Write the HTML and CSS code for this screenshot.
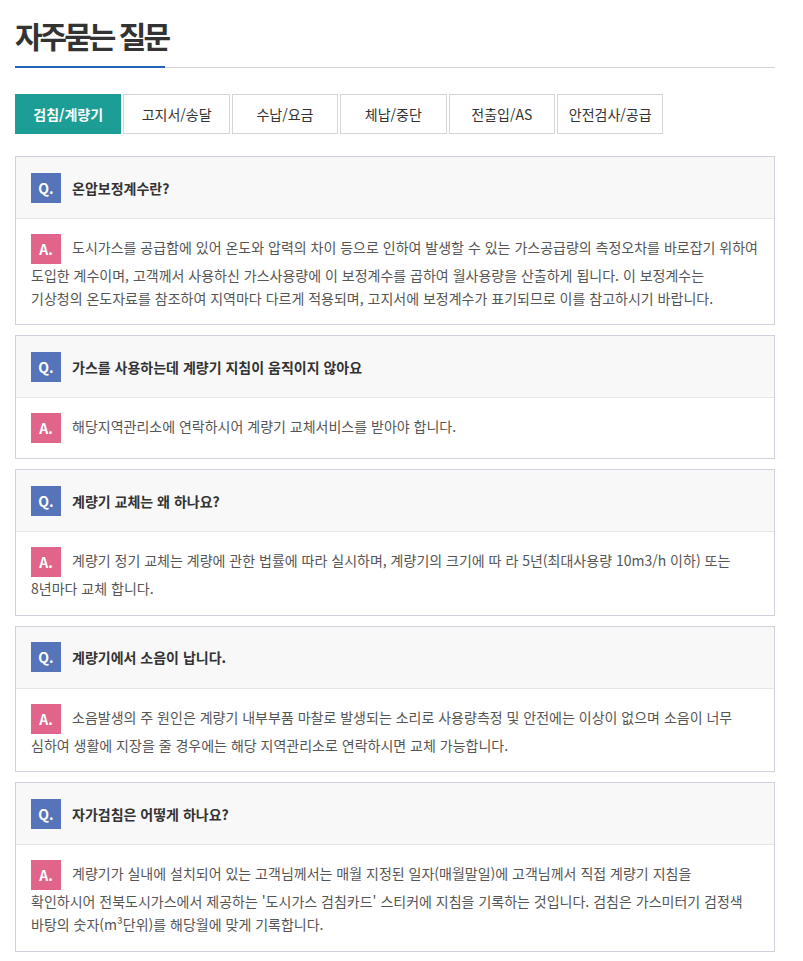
FILE: index.html
```html
<!DOCTYPE html>
<html lang="ko">
<head>
    <meta charset="UTF-8">
    <meta name="viewport" content="width=device-width, initial-scale=1.0">
    <title>자주묻는 질문</title>
    <link rel="stylesheet" href="styles.css">
</head>
<body>
    <div class="faq-wrap">
        <h2 class="page-title">자주묻는 질문</h2>

        <!-- 분류 탭 -->
        <ul class="faq-tabs">
            <li class="on"><a href="#">검침/계량기</a></li>
            <li><a href="#">고지서/송달</a></li>
            <li><a href="#">수납/요금</a></li>
            <li><a href="#">체납/중단</a></li>
            <li><a href="#">전출입/AS</a></li>
            <li><a href="#">안전검사/공급</a></li>
        </ul>

        <!-- 질문 목록 -->
        <div class="faq-list">
            <div class="faq-item">
                <div class="faq-q"><span class="badge q">Q.</span>온압보정계수란?</div>
                <div class="faq-a"><span class="badge a">A.</span>도시가스를 공급함에 있어 온도와 압력의 차이 등으로 인하여 발생할 수 있는 가스공급량의 측정오차를 바로잡기 위하여 도입한 계수이며, 고객께서 사용하신 가스사용량에 이 보정계수를 곱하여 월사용량을 산출하게 됩니다. 이 보정계수는<br>기상청의 온도자료를 참조하여 지역마다 다르게 적용되며, 고지서에 보정계수가 표기되므로 이를 참고하시기 바랍니다.</div>
            </div>
            <div class="faq-item">
                <div class="faq-q"><span class="badge q">Q.</span>가스를 사용하는데 계량기 지침이 움직이지 않아요</div>
                <div class="faq-a"><span class="badge a">A.</span>해당지역관리소에 연락하시어 계량기 교체서비스를 받아야 합니다.</div>
            </div>
            <div class="faq-item">
                <div class="faq-q"><span class="badge q">Q.</span>계량기 교체는 왜 하나요?</div>
                <div class="faq-a"><span class="badge a">A.</span>계량기 정기 교체는 계량에 관한 법률에 따라 실시하며, 계량기의 크기에 따 라 5년(최대사용량 10m3/h 이하) 또는<br>8년마다 교체 합니다.</div>
            </div>
            <div class="faq-item">
                <div class="faq-q"><span class="badge q">Q.</span>계량기에서 소음이 납니다.</div>
                <div class="faq-a"><span class="badge a">A.</span>소음발생의 주 원인은 계량기 내부부품 마찰로 발생되는 소리로 사용량측정 및 안전에는 이상이 없으며 소음이 너무<br>심하여 생활에 지장을 줄 경우에는 해당 지역관리소로 연락하시면 교체 가능합니다.</div>
            </div>
            <div class="faq-item">
                <div class="faq-q"><span class="badge q">Q.</span>자가검침은 어떻게 하나요?</div>
                <div class="faq-a"><span class="badge a">A.</span>계량기가 실내에 설치되어 있는 고객님께서는 매월 지정된 일자(매월말일)에 고객님께서 직접 계량기 지침을<br>확인하시어 전북도시가스에서 제공하는 '도시가스 검침카드' 스티커에 지침을 기록하는 것입니다. 검침은 가스미터기 검정색<br>바탕의 숫자(m³단위)를 해당월에 맞게 기록합니다.</div>
            </div>
        </div>
    </div>
</body>
</html>
```

FILE: styles.css
```css
body {
    margin: 0;
    font-family: "Noto Sans CJK KR", "Noto Sans", sans-serif;
    color: #333;
    background: #fff;
}
.faq-wrap {
    width: 760px;
    padding: 0 15px;
}
.page-title {
    position: relative;
    margin: 0;
    padding: 14px 0 11px;
    font-size: 30px;
    line-height: 42px;
    font-weight: 700;
    letter-spacing: -3px;
    color: #333;
    border-bottom: 1px solid #d3d3d3;
}
.page-title::after {
    content: "";
    position: absolute;
    left: 0;
    bottom: -1px;
    width: 150px;
    height: 2px;
    background: #2163b8;
}
.faq-tabs {
    display: flex;
    gap: 2px;
    margin: 26px 0 22px;
    padding: 0;
    list-style: none;
}
.faq-tabs li {
    width: 106.4px;
}
.faq-tabs a {
    display: block;
    height: 38px;
    line-height: 38px;
    border: 1px solid #d5d5d5;
    text-align: center;
    font-size: 14px;
    color: #333;
    text-decoration: none;
}
.faq-tabs li.on a {
    background: #1c9e96;
    border-color: #1c9e96;
    color: #fff;
    font-weight: 700;
}
.faq-item {
    margin-bottom: 10px;
    border: 1px solid #cdd2de;
}
.faq-q {
    display: flex;
    align-items: center;
    min-height: 31px;
    padding: 15px;
    background: #f8f8f8;
    border-bottom: 1px solid #e6e6e6;
    font-size: 14px;
    font-weight: 700;
    color: #333;
}
.faq-a {
    padding: 15px;
    font-size: 14px;
    line-height: 22.6px;
    color: #555;
}
.badge {
    display: inline-block;
    width: 30px;
    height: 30px;
    margin-right: 11px;
    line-height: 30px;
    text-align: center;
    font-size: 14px;
    font-weight: 700;
    color: #fff;
    vertical-align: middle;
}
.badge.q {
    background: #5674ba;
}
.badge.a {
    background: #e1648a;
}
```
